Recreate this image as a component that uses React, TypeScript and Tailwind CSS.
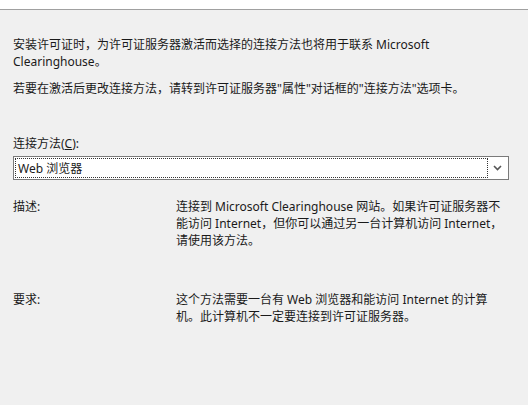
import React from 'react';

const font = { fontFamily: '"Noto Sans", "Noto Sans CJK SC", sans-serif' };

const InfoRow: React.FC<{ label: string; children: React.ReactNode }> = ({ label, children }) => (
    <div className="flex">
        <div className="w-[163px] shrink-0">{label}</div>
        <div className="w-[330px]">{children}</div>
    </div>
);

const App: React.FC = () => {
    return (
        <div className="w-[528px] h-[405px] bg-[#f0f0f0] text-[12px] leading-[17px] text-[#1a1a1a] overflow-hidden" style={font}>
            <div className="h-[10px] bg-white border-b border-[#a0a0a0]" />
            <div className="px-[13px] pt-[26px]">
                <p className="w-[440px]">安装许可证时，为许可证服务器激活而选择的连接方法也将用于联系 Microsoft Clearinghouse。</p>
                <p className="mt-[10px]">若要在激活后更改连接方法，请转到许可证服务器"属性"对话框的"连接方法"选项卡。</p>

                <div className="mt-[38px]">连接方法(<span className="underline">C</span>):</div>
                <div className="mt-[4px] w-[496px] h-[24px] bg-white border border-[#7a7a7a] flex items-center p-[1px]">
                    <div className="flex-1 h-full border border-dotted border-[#333] flex items-center pl-[2px]">Web 浏览器</div>
                    <div className="w-[19px] h-full flex items-center justify-center">
                        <svg width="9" height="6" viewBox="0 0 9 6">
                            <path d="M1 1 L4.5 4.5 L8 1" stroke="#555" strokeWidth="1.6" fill="none" />
                        </svg>
                    </div>
                </div>

                <div className="mt-[18px]">
                    <InfoRow label="描述:">
                        连接到 Microsoft Clearinghouse 网站。如果许可证服务器不能访问 Internet，但你可以通过另一台计算机访问 Internet，请使用该方法。
                    </InfoRow>
                </div>
                <div className="mt-[42px]">
                    <InfoRow label="要求:">
                        这个方法需要一台有 Web 浏览器和能访问 Internet 的计算机。此计算机不一定要连接到许可证服务器。
                    </InfoRow>
                </div>
            </div>
        </div>
    );
};

export default App;
